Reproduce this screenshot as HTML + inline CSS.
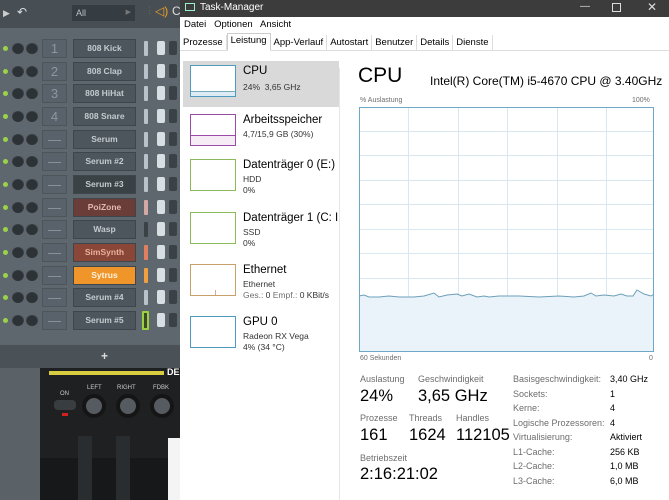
<!DOCTYPE html>
<html><head><meta charset="utf-8"><style>
*{margin:0;padding:0;box-sizing:border-box}
body{width:669px;height:500px;overflow:hidden;position:relative;font-family:"Liberation Sans",sans-serif;background:#fff}
.a{position:absolute}
.fl{left:0;top:0;width:180px;height:500px;background:#5e676d;overflow:hidden}
.row{position:absolute;left:0;width:180px;height:19px}
.dot{position:absolute;left:3px;top:7px;width:5px;height:5px;border-radius:50%;background:#9ad24a}
.kn{position:absolute;top:3px;width:12px;height:12px;border-radius:50%;background:#2c3236;box-shadow:inset 0 1px 1px #6b757b}
.num{position:absolute;left:42px;top:0;width:25px;height:19px;border:1px solid #4c555a;background:#59626a;color:#8d979d;font-size:13px;text-align:center;line-height:18px}
.nm{position:absolute;left:73px;top:0;width:63px;height:19px;background:#4d565c;border:1px solid #3e464b;color:#c3cbd0;font-size:8.5px;font-weight:bold;text-align:center;line-height:17px}
.bar{position:absolute;left:144px;top:2px;width:4px;height:15px;background:#b8c2c8;border-radius:1px}
.t1{position:absolute;left:157px;top:2px;width:8px;height:14px;background:#d8dfe2;border-radius:2px}
.t2{position:absolute;left:169px;top:2px;width:8px;height:14px;background:#3b4247;border-radius:2px}
.tm{left:180px;top:0;width:489px;height:500px;background:#fff;font-family:"Liberation Sans",sans-serif;color:#000}
.g{color:#6d6d6d}
.side{position:absolute;left:0;top:0;width:159px;height:500px;overflow:hidden}
.side .it{position:absolute;left:0;width:158px;height:46px;white-space:nowrap}
.th{position:absolute;left:10px;top:4px;width:46px;height:32px;border:1px solid}
.it .t{position:absolute;left:63px;top:4px;font-size:11.5px;white-space:nowrap}
.it .s{position:absolute;left:63px;font-size:8.5px;color:#333;white-space:nowrap}
.lbl{font-size:9px;color:#6d6d6d;position:absolute}
.big{font-size:16.5px;position:absolute}
.rl{font-size:9px;color:#6d6d6d;position:absolute;left:513px}
.rv{font-size:9px;position:absolute;left:610px}
</style></head><body>
<div class="a fl">
 <div class="a" style="left:0;top:0;width:180px;height:28px;background:#474f55"></div>
 <div class="a" style="left:3px;top:8px;color:#ccc;font-size:9px">▶</div>
 <div class="a" style="left:17px;top:5px;color:#ddd;font-size:12px">↶</div>
 <div class="a" style="left:72px;top:5px;width:63px;height:16px;background:#363d42;color:#b9c0c5;font-size:9px;padding:3px 4px">All<span style="float:right;font-size:7px;color:#777">▶</span></div>
 <div class="a" style="left:145px;top:5px;color:#666;font-size:9px">⋮</div>
 <div class="a" style="left:155px;top:4px;color:#f0a020;font-size:12px">◁)</div>
 <div class="a" style="left:172px;top:4px;color:#ddd;font-size:12px">Cl</div>

 <div class="row" style="top:39px"><i class="dot"></i><i class="kn" style="left:12px"></i><i class="kn" style="left:26px"></i><div class="num">1</div><div class="nm">808 Kick</div><i class="bar"></i><i class="t1"></i><i class="t2"></i></div>
 <div class="row" style="top:62px"><i class="dot"></i><i class="kn" style="left:12px"></i><i class="kn" style="left:26px"></i><div class="num">2</div><div class="nm">808 Clap</div><i class="bar"></i><i class="t1"></i><i class="t2"></i></div>
 <div class="row" style="top:84px"><i class="dot"></i><i class="kn" style="left:12px"></i><i class="kn" style="left:26px"></i><div class="num">3</div><div class="nm">808 HiHat</div><i class="bar"></i><i class="t1"></i><i class="t2"></i></div>
 <div class="row" style="top:107px"><i class="dot"></i><i class="kn" style="left:12px"></i><i class="kn" style="left:26px"></i><div class="num">4</div><div class="nm">808 Snare</div><i class="bar"></i><i class="t1"></i><i class="t2"></i></div>
 <div class="row" style="top:130px"><i class="dot"></i><i class="kn" style="left:12px"></i><i class="kn" style="left:26px"></i><div class="num">—</div><div class="nm">Serum</div><i class="bar"></i><i class="t1"></i><i class="t2"></i></div>
 <div class="row" style="top:152px"><i class="dot"></i><i class="kn" style="left:12px"></i><i class="kn" style="left:26px"></i><div class="num">—</div><div class="nm">Serum #2</div><i class="bar"></i><i class="t1"></i><i class="t2"></i></div>
 <div class="row" style="top:175px"><i class="dot"></i><i class="kn" style="left:12px"></i><i class="kn" style="left:26px"></i><div class="num">—</div><div class="nm" style="background:#3a4246">Serum #3</div><i class="bar"></i><i class="t1"></i><i class="t2"></i></div>
 <div class="row" style="top:198px"><i class="dot"></i><i class="kn" style="left:12px"></i><i class="kn" style="left:26px"></i><div class="num">—</div><div class="nm" style="background:#6a3d39;color:#e0b8b0">PoiZone</div><i class="bar" style="background:#d4a8a4"></i><i class="t1"></i><i class="t2"></i></div>
 <div class="row" style="top:220px"><i class="dot"></i><i class="kn" style="left:12px"></i><i class="kn" style="left:26px"></i><div class="num">—</div><div class="nm">Wasp</div><i class="bar" style="background:#3a4246"></i><i class="t1"></i><i class="t2"></i></div>
 <div class="row" style="top:243px"><i class="dot"></i><i class="kn" style="left:12px"></i><i class="kn" style="left:26px"></i><div class="num">—</div><div class="nm" style="background:#8a4636;color:#eab0a0">SimSynth</div><i class="bar" style="background:#e08060"></i><i class="t1"></i><i class="t2"></i></div>
 <div class="row" style="top:266px"><i class="dot"></i><i class="kn" style="left:12px"></i><i class="kn" style="left:26px"></i><div class="num">—</div><div class="nm" style="background:#f0952a;color:#fff3e0">Sytrus</div><i class="bar" style="background:#f0a040"></i><i class="t1"></i><i class="t2"></i></div>
 <div class="row" style="top:288px"><i class="dot"></i><i class="kn" style="left:12px"></i><i class="kn" style="left:26px"></i><div class="num">—</div><div class="nm">Serum #4</div><i class="bar"></i><i class="t1"></i><i class="t2"></i></div>
 <div class="row" style="top:311px"><i class="dot"></i><i class="kn" style="left:12px"></i><i class="kn" style="left:26px"></i><div class="num">—</div><div class="nm">Serum #5</div><i class="bar" style="left:142px;width:7px;top:0;height:19px;background:#3a4a2a;border:2px solid #9bd040"></i><i class="t1"></i><i class="t2"></i></div>

 <div class="a" style="left:0;top:345px;width:180px;height:23px;background:#4a5257"></div>
 <div class="a" style="left:101px;top:349px;color:#ddd;font-size:12px;font-weight:bold">+</div>
 <div class="a" style="left:0;top:368px;width:180px;height:132px;background:#2b2f32"></div>
 <div class="a" style="left:0;top:368px;width:40px;height:132px;background:#5a6268"></div>
 <div class="a" style="left:40px;top:368px;width:140px;height:90px;background:#1e2022"></div>
 <div class="a" style="left:49px;top:371px;width:115px;height:4px;background:#d8cc40"></div>
 <div class="a" style="left:167px;top:367px;color:#fff;font-size:9px;font-weight:bold">DE</div>
 <div class="a" style="left:60px;top:391px;color:#ccc;font-size:6px">ON</div>
 <div class="a" style="left:54px;top:400px;width:22px;height:10px;background:#3a3d40;border-radius:4px"></div>
 <div class="a" style="left:62px;top:413px;width:6px;height:3px;background:#d02020"></div>
 <div class="a" style="left:87px;top:385px;color:#ccc;font-size:6px">LEFT</div>
 <div class="a" style="left:117px;top:385px;color:#ccc;font-size:6px">RIGHT</div>
 <div class="a" style="left:153px;top:385px;color:#ccc;font-size:6px">FDBK</div>
 <div class="a" style="left:82px;top:394px;width:24px;height:24px;border-radius:50%;background:#555b60;border:4px solid #151515"></div>
 <div class="a" style="left:116px;top:394px;width:24px;height:24px;border-radius:50%;background:#555b60;border:4px solid #151515"></div>
 <div class="a" style="left:150px;top:394px;width:24px;height:24px;border-radius:50%;background:#555b60;border:4px solid #151515"></div>
 <div class="a" style="left:40px;top:458px;width:140px;height:42px;background:#161819"></div>
 <div class="a" style="left:78px;top:436px;width:14px;height:64px;background:#2a2d2f"></div>
 <div class="a" style="left:116px;top:436px;width:14px;height:64px;background:#2a2d2f"></div>
 <div class="a" style="left:168px;top:438px;width:12px;height:62px;background:#f4f4f4"></div>
</div>

<div class="a tm">
 <div class="a" style="left:0;top:0;width:489px;height:17px;background:#3c3c3c;color:#fff;font-size:10px;padding:2px 0 0 20px">Task-Manager</div>
 <div class="a" style="left:5px;top:3px;width:10px;height:8px;border:1px solid #9ec;"></div>
 <div class="a" style="left:400px;top:1px;color:#ddd;font-size:10px">—</div>
 <div class="a" style="left:432px;top:1px;width:9px;height:9px;border:1px solid #ddd;margin-top:2px"></div>
 <div class="a" style="left:467px;top:0px;color:#ddd;font-size:12px">✕</div>
 <div class="a" style="left:4px;top:19px;font-size:9.5px">Datei&nbsp;&nbsp; Optionen&nbsp;&nbsp; Ansicht</div>
 <div class="a" style="left:0;top:50px;width:489px;height:1px;background:#ddd"></div>
 <div class="a" style="left:0;top:35px;height:16px;font-size:9.5px;display:flex">
  <span style="padding:2px 3px;border-right:1px solid #ddd">Prozesse</span>
  <span style="padding:1px 3px;border:1px solid #ccc;border-bottom:1px solid #fff;background:#fff;margin-top:-2px;height:18px">Leistung</span>
  <span style="padding:2px 3px;border-right:1px solid #ddd">App-Verlauf</span>
  <span style="padding:2px 3px;border-right:1px solid #ddd">Autostart</span>
  <span style="padding:2px 3px;border-right:1px solid #ddd">Benutzer</span>
  <span style="padding:2px 3px;border-right:1px solid #ddd">Details</span>
  <span style="padding:2px 3px;border-right:1px solid #ddd">Dienste</span>
 </div>
 <div class="side">
  <div class="it" style="top:61px;background:#d9d9d9;width:156px;left:3px"><div class="th" style="border-color:#4f9bc0;background:#fff;left:7px"><div class="a" style="left:0;bottom:0;width:44px;height:5px;background:#dcebf4;border-top:1px solid #7ab"></div></div><div class="t" style="left:60px">CPU</div><div class="s" style="left:60px;top:21px">24%&nbsp; 3,65 GHz</div></div>
  <div class="it" style="top:110px"><div class="th" style="border-color:#9b4aa8"><div class="a" style="left:0;bottom:0;width:44px;height:10px;background:#f5ecf6;border-top:1px solid #9b4aa8"></div></div><div class="t">Arbeitsspeicher</div><div class="s" style="top:19px">4,7/15,9 GB (30%)</div></div>
  <div class="it" style="top:155px"><div class="th" style="border-color:#8cba5a;top:4px"></div><div class="t">Datenträger 0 (E:)</div><div class="s" style="top:19px">HDD</div><div class="s" style="top:30px">0%</div></div>
  <div class="it" style="top:208px"><div class="th" style="border-color:#8cba5a"></div><div class="t">Datenträger 1 (C: I</div><div class="s" style="top:19px">SSD</div><div class="s" style="top:30px">0%</div></div>
  <div class="it" style="top:260px"><div class="th" style="border-color:#c8a06a"><div class="a" style="left:24px;bottom:0;width:1px;height:5px;background:#d9a9a0"></div></div><div class="t">Ethernet</div><div class="s" style="top:19px">Ethernet</div><div class="s" style="top:30px"><span class="g">Ges.:</span> 0 <span class="g">Empf.:</span> 0 KBit/s</div></div>
  <div class="it" style="top:312px"><div class="th" style="border-color:#4f9bc0"></div><div class="t">GPU 0</div><div class="s" style="top:19px">Radeon RX Vega</div><div class="s" style="top:30px">4% (34 °C)</div></div>
 </div>
 <div class="a" style="left:159px;top:68px;width:1px;height:432px;background:#e6e6e6"></div>
 <div class="a" style="left:178px;top:64px;font-size:21px">CPU</div>
 <div class="a" style="left:250px;top:74px;font-size:12px">Intel(R) Core(TM) i5-4670 CPU @ 3.40GHz</div>
 <div class="a g" style="left:180px;top:97px;font-size:7px">% Auslastung</div>
 <div class="a g" style="left:452px;top:97px;font-size:7px">100%</div>
 <svg class="a" style="left:179px;top:107px" width="295" height="245" viewBox="0 0 295 245">
  <g stroke="#d9e8f0" stroke-width="1">
   <line x1="49.5" y1="0" x2="49.5" y2="245"/><line x1="99.5" y1="0" x2="99.5" y2="245"/><line x1="148.5" y1="0" x2="148.5" y2="245"/><line x1="198.5" y1="0" x2="198.5" y2="245"/><line x1="247.5" y1="0" x2="247.5" y2="245"/>
   <line x1="0" y1="24.5" x2="295" y2="24.5"/><line x1="0" y1="48.5" x2="295" y2="48.5"/><line x1="0" y1="73.5" x2="295" y2="73.5"/><line x1="0" y1="97.5" x2="295" y2="97.5"/><line x1="0" y1="122.5" x2="295" y2="122.5"/><line x1="0" y1="146.5" x2="295" y2="146.5"/><line x1="0" y1="171.5" x2="295" y2="171.5"/><line x1="0" y1="195.5" x2="295" y2="195.5"/><line x1="0" y1="220.5" x2="295" y2="220.5"/>
  </g>
  <path d="M0,189 L5,188 L10,190 L20,190 L30,189 L40,190 L55,190 L65,189 L75,186 L80,190 L88,188 L98,187 L103,189 L110,187 L118,190 L125,189 L130,190 L140,189 L160,189 L180,190 L200,189 L215,190 L225,189 L232,186 L237,189 L245,188 L255,189 L262,187 L268,189 L274,189 L278,183 L285,187 L292,189 L295,187 L295,245 L0,245Z" fill="#eaf3fa" stroke="#6b9fb8" stroke-width="1"/>
  <rect x="0.5" y="0.5" width="294" height="244" fill="none" stroke="#6fa8c6"/>
 </svg>
 <div class="a g" style="left:180px;top:355px;font-size:7px">60 Sekunden</div>
 <div class="a g" style="left:469px;top:355px;font-size:7px">0</div>
 <div class="lbl" style="left:180px;top:374px">Auslastung</div>
 <div class="lbl" style="left:238px;top:374px">Geschwindigkeit</div>
 <div class="big" style="left:180px;top:387px">24%</div>
 <div class="big" style="left:238px;top:387px">3,65 GHz</div>
 <div class="lbl" style="left:180px;top:413px">Prozesse</div>
 <div class="lbl" style="left:229px;top:413px">Threads</div>
 <div class="lbl" style="left:276px;top:413px">Handles</div>
 <div class="big" style="left:180px;top:426px">161</div>
 <div class="big" style="left:229px;top:426px">1624</div>
 <div class="big" style="left:276px;top:426px">112105</div>
 <div class="lbl" style="left:180px;top:453px">Betriebszeit</div>
 <div class="big" style="left:180px;top:465px">2:16:21:02</div>
 <div class="rl" style="left:333px;top:374px">Basisgeschwindigkeit:</div><div class="rv" style="left:430px;top:374px">3,40 GHz</div>
 <div class="rl" style="left:333px;top:389px">Sockets:</div><div class="rv" style="left:430px;top:389px">1</div>
 <div class="rl" style="left:333px;top:403px">Kerne:</div><div class="rv" style="left:430px;top:403px">4</div>
 <div class="rl" style="left:333px;top:418px">Logische Prozessoren:</div><div class="rv" style="left:430px;top:418px">4</div>
 <div class="rl" style="left:333px;top:432px">Virtualisierung:</div><div class="rv" style="left:430px;top:432px">Aktiviert</div>
 <div class="rl" style="left:333px;top:447px">L1-Cache:</div><div class="rv" style="left:430px;top:447px">256 KB</div>
 <div class="rl" style="left:333px;top:461px">L2-Cache:</div><div class="rv" style="left:430px;top:461px">1,0 MB</div>
 <div class="rl" style="left:333px;top:476px">L3-Cache:</div><div class="rv" style="left:430px;top:476px">6,0 MB</div>
</div>
</body></html>
